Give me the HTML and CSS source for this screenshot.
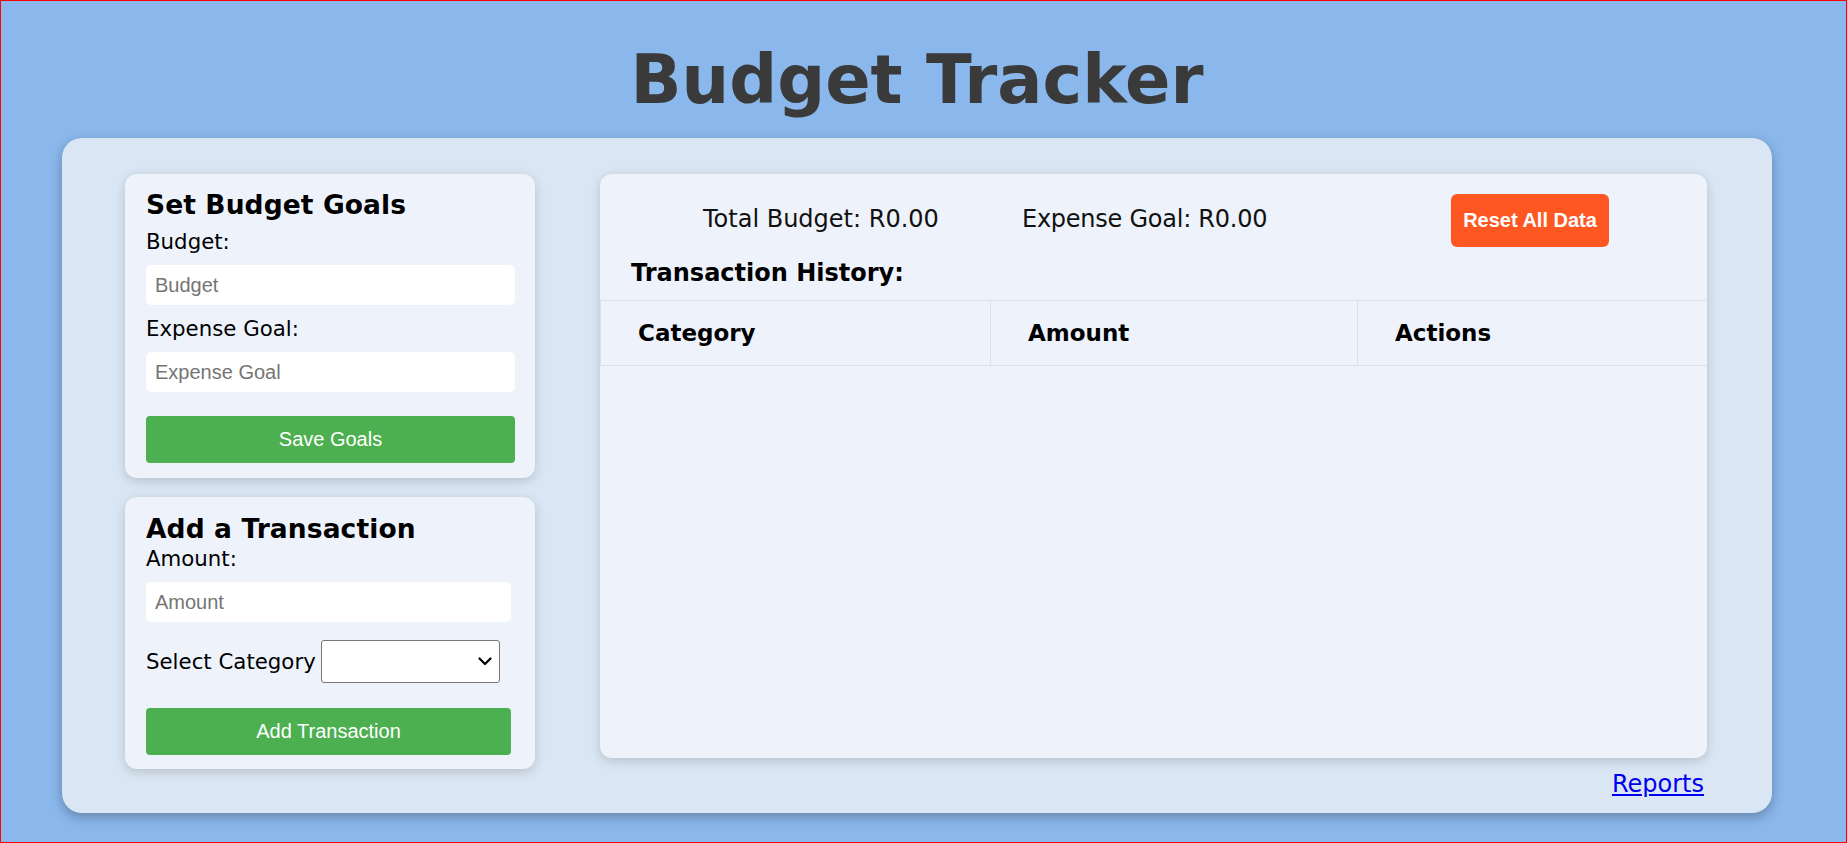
FILE: index.html
```html
<!DOCTYPE html>
<html lang="en">
<head>
<meta charset="utf-8">
<title>Budget Tracker</title>
<link rel="stylesheet" href="styles.css">
</head>
<body>
<div class="page">
  <div class="app">
    <h1 class="title">Budget Tracker</h1>
    <main class="panel">
      <div class="sidebar">
        <section class="card goals-card">
          <h2 class="card-title">Set Budget Goals</h2>
          <label class="field-label first-label" for="budget">Budget:</label>
          <input class="text-input" id="budget" type="number" placeholder="Budget">
          <label class="field-label next-label" for="expense">Expense Goal:</label>
          <input class="text-input" id="expense" type="number" placeholder="Expense Goal">
          <button class="btn-green">Save Goals</button>
        </section>
        <section class="card tx-card">
          <h2 class="card-title">Add a Transaction</h2>
          <label class="field-label amount-label" for="amount">Amount:</label>
          <input class="text-input" id="amount" type="number" placeholder="Amount">
          <div class="select-row">
            <label class="field-label" for="category">Select Category</label>
            <span class="select-wrap">
              <select class="category-select" id="category"></select>
              <svg class="chevron" width="14" height="9" viewBox="0 0 14 9" aria-hidden="true"><path d="M1.5 1.5 L7 7 L12.5 1.5" fill="none" stroke="#000" stroke-width="2.2" stroke-linecap="round" stroke-linejoin="round"/></svg>
            </span>
          </div>
          <button class="btn-green tx-btn">Add Transaction</button>
        </section>
      </div>
      <div class="main-col">
        <section class="card history-card">
          <div class="summary">
            <span class="stat stat-total">Total Budget: R0.00</span>
            <span class="stat stat-goal">Expense Goal: R0.00</span>
            <button class="btn-reset">Reset All Data</button>
          </div>
          <h3 class="history-title">Transaction History:</h3>
          <table class="tx-table">
            <colgroup>
              <col class="col-cat">
              <col class="col-amt">
              <col class="col-act">
            </colgroup>
            <thead>
              <tr>
                <th>Category</th>
                <th>Amount</th>
                <th>Actions</th>
              </tr>
            </thead>
            <tbody></tbody>
          </table>
        </section>
        <a class="reports-link" href="#">Reports</a>
      </div>
    </main>
  </div>
</div>
</body>
</html>
```

FILE: styles.css
```css
html, body {
  margin: 0;
  padding: 0;
  overflow: hidden;
}

body {
  font-family: "DejaVu Sans", sans-serif;
  color: #000;
}

.page {
  box-sizing: border-box;
  height: 843px;
  border: 1px solid #ff0000;
  background: #8ab7ec;
  padding-top: 40px;
}

.app {
  width: 1710px;
  margin-left: 61px;
}

.title {
  margin: 0 0 19px;
  text-align: center;
  font-size: 67px;
  line-height: 78px;
  font-weight: bold;
  color: #3a3a3a;
}

.panel {
  display: flex;
  align-items: flex-start;
  gap: 65px;
  padding: 36px 65px 15px 63px;
  background: #dae6f3;
  border-radius: 20px;
  box-shadow: 0 4px 12px rgba(0, 0, 0, 0.28);
}

.sidebar {
  width: 410px;
  display: flex;
  flex-direction: column;
  gap: 19px;
}

.card {
  background: #eef3fb;
  border-radius: 12px;
  box-shadow: 0 3px 11px rgba(0, 0, 0, 0.16);
}

.goals-card,
.tx-card {
  display: flex;
  flex-direction: column;
  align-items: flex-start;
}

.goals-card {
  padding: 16px 20px 15px 21px;
}

.tx-card {
  padding: 17px 24px 14px 21px;
}

.card-title {
  margin: 0;
  font-size: 26.5px;
  line-height: 30px;
  font-weight: bold;
  letter-spacing: 0.1px;
}

.field-label {
  font-size: 21.3px;
  line-height: 26px;
}

.first-label {
  margin-top: 9px;
}

.next-label {
  margin-top: 11px;
}

.amount-label {
  margin-top: 2px;
}

.text-input {
  box-sizing: border-box;
  width: 369px;
  height: 40px;
  margin: 10px 0 0;
  padding: 0 9px;
  border: none;
  border-radius: 5px;
  background: #fff;
  font-family: "Liberation Sans", Arial, sans-serif;
  font-size: 20px;
  color: #000;
  outline: none;
}

.tx-card .text-input {
  width: 365px;
}

.text-input::placeholder {
  color: #757575;
}

.btn-green {
  width: 369px;
  height: 47px;
  margin-top: 24px;
  border: none;
  border-radius: 4px;
  background: #4caf50;
  color: #fff;
  font-family: "Liberation Sans", Arial, sans-serif;
  font-size: 20px;
  padding: 0;
}

.tx-btn {
  width: 365px;
  margin-top: 25px;
}

.select-row {
  display: flex;
  align-items: center;
  gap: 5px;
  margin-top: 18px;
  height: 43px;
}

.select-wrap {
  position: relative;
  display: block;
  width: 179px;
  height: 43px;
}

.category-select {
  box-sizing: border-box;
  display: block;
  width: 179px;
  height: 43px;
  border: 1px solid #767676;
  border-radius: 3px;
  background: #fff;
  font-family: "Liberation Sans", Arial, sans-serif;
  font-size: 16px;
  appearance: none;
  -webkit-appearance: none;
}

.chevron {
  position: absolute;
  right: 8px;
  top: 17px;
  pointer-events: none;
}

.main-col {
  width: 1107px;
  display: flex;
  flex-direction: column;
}

.history-card {
  box-sizing: border-box;
  height: 584px;
  overflow: hidden;
}

.summary {
  display: flex;
  align-items: center;
  padding: 20px 0 0 103px;
  height: 53px;
}

.stat {
  font-size: 24px;
  line-height: 28px;
  color: #111;
  margin-bottom: 3px;
}

.stat-total {
  width: 319px;
}

.stat-goal {
  letter-spacing: -0.25px;
}

.btn-reset {
  margin-left: auto;
  margin-right: 98px;
  width: 158px;
  height: 53px;
  padding: 0;
  border: none;
  border-radius: 6px;
  background: #ff5722;
  color: #fff;
  font-family: "Liberation Sans", Arial, sans-serif;
  font-size: 20px;
  font-weight: bold;
}

.history-title {
  margin: 12px 0 0 31px;
  font-size: 24px;
  line-height: 28px;
  font-weight: bold;
}

.tx-table {
  width: 100%;
  margin-top: 13px;
  border-collapse: collapse;
  table-layout: fixed;
}

.col-cat {
  width: 390px;
}

.col-amt {
  width: 367px;
}

.col-act {
  width: 350px;
}

.tx-table th {
  height: 64px;
  padding: 0 0 0 37px;
  border: 1px solid #dcdfe3;
  text-align: left;
  vertical-align: middle;
  font-size: 23px;
  line-height: 27px;
  font-weight: bold;
}

.reports-link {
  align-self: flex-end;
  margin: 12px 3px 0 0;
  font-size: 24px;
  line-height: 28px;
  color: #0000ee;
  text-decoration: underline;
}
```
